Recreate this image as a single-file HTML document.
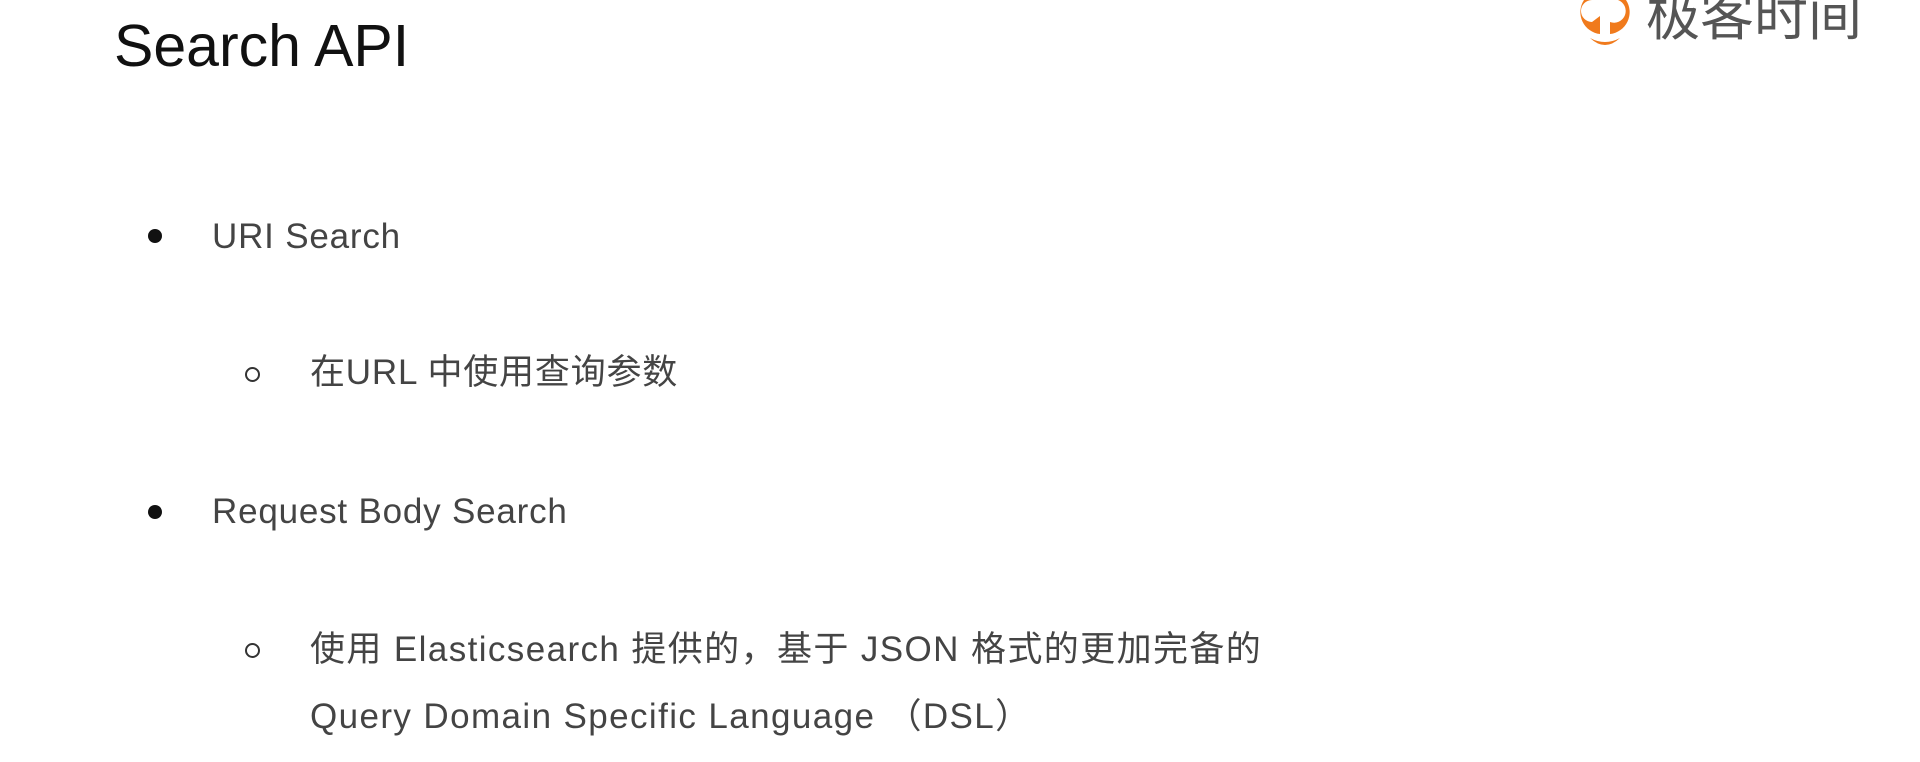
<!DOCTYPE html>
<html><head><meta charset="utf-8"><style>
html,body{margin:0;padding:0;background:#fff;width:1920px;height:762px;overflow:hidden;position:relative;font-family:"Liberation Sans","Noto Sans CJK SC",sans-serif;}
.t{position:absolute;white-space:nowrap;line-height:1;}
.title{left:114px;top:17px;font-size:59px;color:#111;}
.b{font-size:35px;color:#444;letter-spacing:0.8px;}
.w{letter-spacing:1.4px;}
.dot{position:absolute;width:14px;height:14px;border-radius:50%;background:#111;}
.circ{position:absolute;width:11px;height:11px;border-radius:50%;border:2px solid #333;}
</style></head><body>
<div class="t title">Search API</div>
<svg style="position:absolute;left:1576px;top:0" width="58" height="48" viewBox="0 0 58 48">
<path d="M8 0 A22 22 0 0 0 24 34 L24 16 L16 22 A10 10 0 0 1 16 0Z" fill="#f07a1c"/>
<path d="M42 0 A10 10 0 0 1 34 22 L34 34 A22 22 0 0 0 50 0Z" fill="#f07a1c"/>
<path d="M14 38 Q29 46 44 38 Q29 52 14 38Z" fill="#f07a1c"/>
</svg>
<div class="t" style="left:1646px;top:-10px;font-size:54px;color:#555;">极客时间</div>
<div class="dot" style="left:148px;top:229px"></div>
<div class="t b" style="left:212px;top:219px">URI Search</div>
<div class="circ" style="left:245px;top:367px"></div>
<div class="t b" style="left:310px;top:355px">在URL 中使用查询参数</div>
<div class="dot" style="left:148px;top:505px"></div>
<div class="t b" style="left:212px;top:494px">Request Body Search</div>
<div class="circ" style="left:245px;top:643px"></div>
<div class="t b w" style="left:310px;top:632px">使用 Elasticsearch 提供的，基于 JSON 格式的更加完备的</div>
<div class="t b w" style="left:310px;top:699px">Query Domain Specific Language （DSL）</div>
</body></html>
